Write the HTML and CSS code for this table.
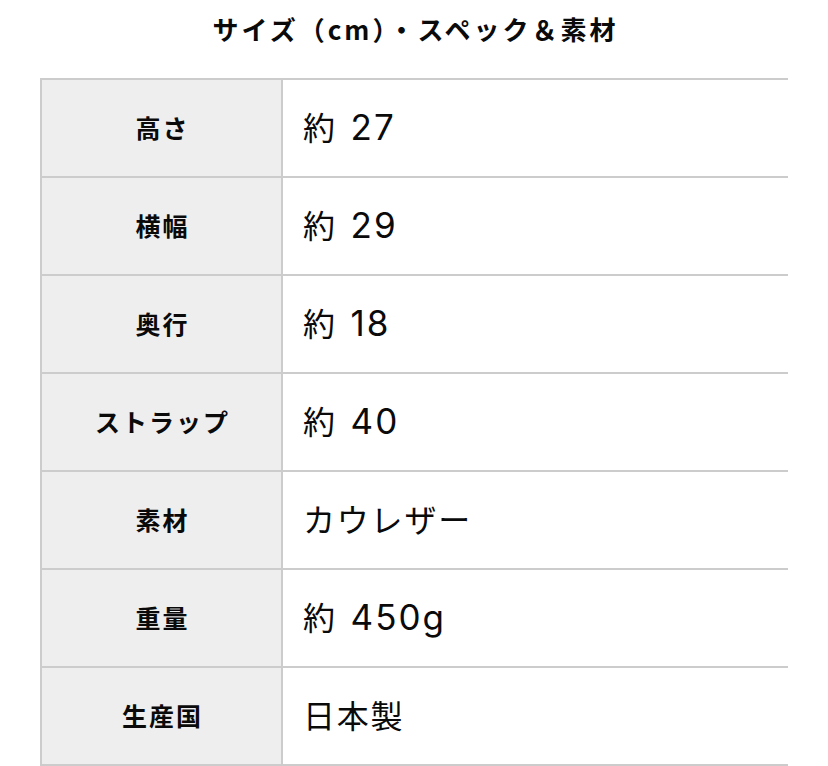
FILE: index.html
```html
<!DOCTYPE html>
<html lang="ja">
<head>
<meta charset="utf-8">
<link rel="stylesheet" href="styles.css">
</head>
<body>
<h2 class="title">サイズ（cm）・スペック＆素材</h2>
<table class="spec">
  <tr><th>高さ</th><td>約 <span class="num">27</span></td></tr>
  <tr><th>横幅</th><td>約 <span class="num">29</span></td></tr>
  <tr><th>奥行</th><td>約 <span class="num">18</span></td></tr>
  <tr><th>ストラップ</th><td>約 <span class="num">40</span></td></tr>
  <tr><th>素材</th><td>カウレザー</td></tr>
  <tr><th>重量</th><td>約 <span class="num">450g</span></td></tr>
  <tr><th>生産国</th><td>日本製</td></tr>
</table>
</body>
</html>
```

FILE: styles.css
```css
html, body {
  margin: 0;
  padding: 0;
  background: #ffffff;
}
body {
  font-family: "Inter", "Noto Sans CJK JP", sans-serif;
  color: #0a0a0a;
  overflow: hidden;
}
.title {
  margin: 11px 0 31px;
  height: 36px;
  line-height: 36px;
  font-size: 26px;
  font-weight: 700;
  letter-spacing: 3px;
  text-indent: 3px;
  text-align: center;
  font-family: "Noto Sans CJK JP", sans-serif;
}
.spec {
  margin-left: 40px;
  width: 748px;
  border-collapse: collapse;
  table-layout: fixed;
}
.spec th, .spec td {
  height: 96px;
  padding: 0;
  border: 2px solid #cccccc;
  box-sizing: border-box;
}
.spec tr {
  height: 98px;
}
.spec th {
  width: 241px;
  background: #eeeeee;
  font-family: "Noto Sans CJK JP", sans-serif;
  font-size: 25px;
  font-weight: 700;
  letter-spacing: 2px;
  text-indent: 2px;
  text-align: center;
  padding-bottom: 2px;
}
.spec td {
  border-right: none;
  padding: 0 0 5px 20px;
  font-size: 32px;
  font-weight: 400;
  letter-spacing: 1.8px;
  text-align: left;
}
.num {
  font-size: 35px;
  letter-spacing: 2px;
  margin-left: 3px;
}
```
